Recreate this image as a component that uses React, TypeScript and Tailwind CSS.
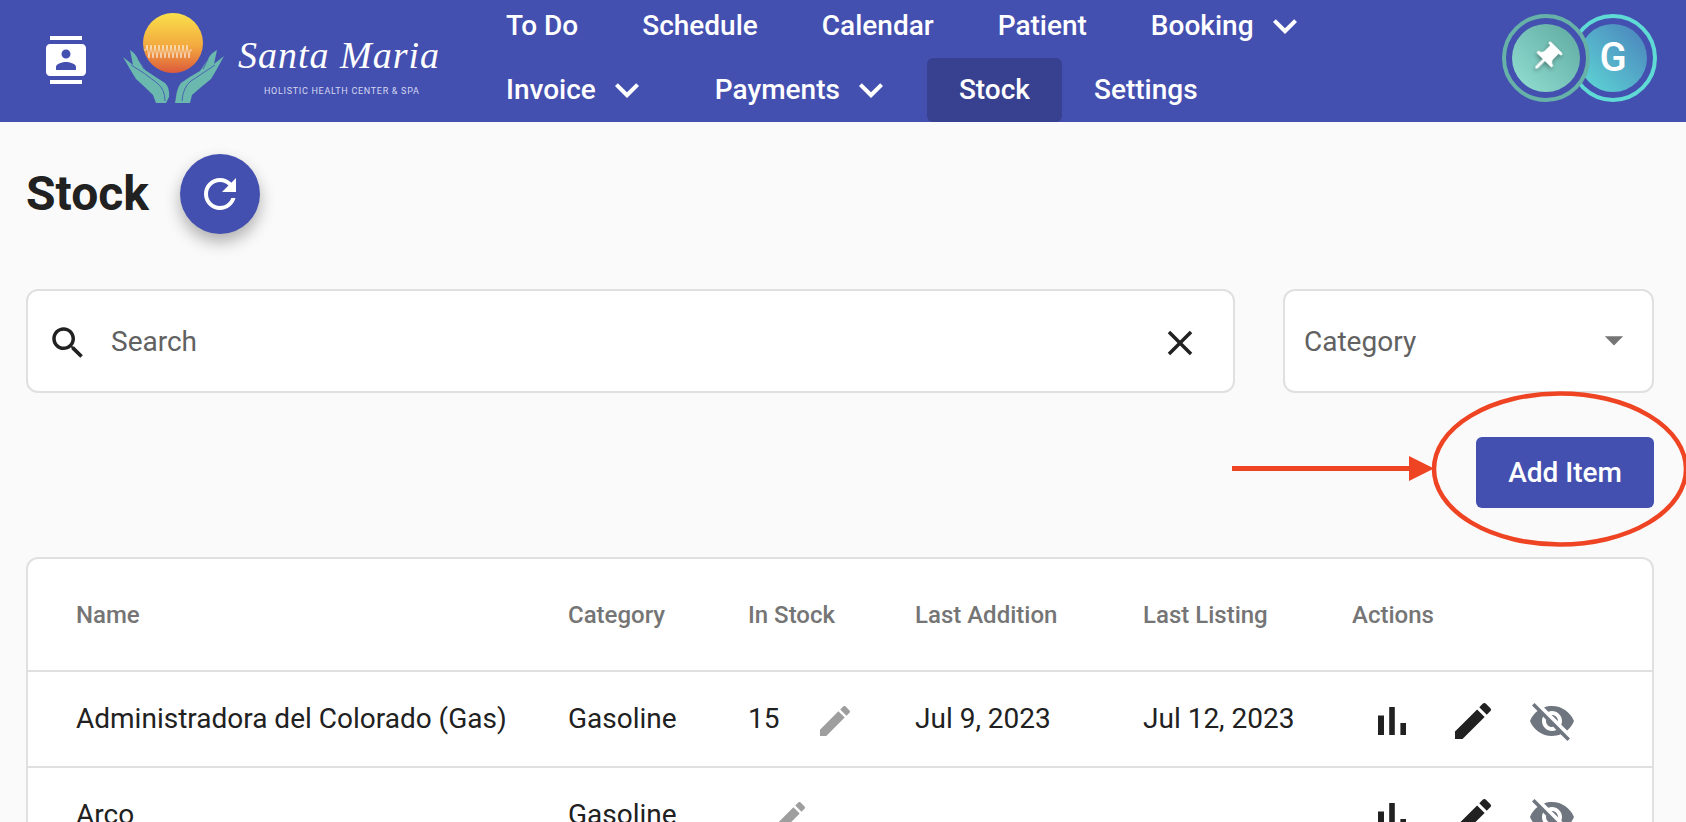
const ICONS = {
  contacts: 'M20 0H4v2h16V0zM4 24h16v-2H4v2zM20 4H4c-1.1 0-2 .9-2 2v12c0 1.1.9 2 2 2h16c1.1 0 2-.9 2-2V6c0-1.1-.9-2-2-2zm-8 2.75c1.24 0 2.25 1.01 2.25 2.25s-1.01 2.25-2.25 2.25S9.75 10.24 9.75 9 10.76 6.75 12 6.75zM17 17H7v-1.5c0-1.67 3.33-2.5 5-2.5s5 .83 5 2.5V17z',
  chevron: 'M16.59 8.59L12 13.17 7.41 8.59 6 10l6 6 6-6z',
  refresh: 'M17.65 6.35C16.2 4.9 14.21 4 12 4c-4.42 0-7.99 3.58-7.99 8s3.57 8 7.99 8c3.73 0 6.84-2.55 7.73-6h-2.08c-.82 2.33-3.04 4-5.65 4-3.31 0-6-2.69-6-6s2.69-6 6-6c1.66 0 3.14.69 4.22 1.78L13 11h7V4l-2.35 2.35z',
  search: 'M15.5 14h-.79l-.28-.27C15.41 12.59 16 11.11 16 9.5 16 5.91 13.09 3 9.5 3S3 5.91 3 9.5 5.91 16 9.5 16c1.61 0 3.09-.59 4.23-1.57l.27.28v.79l5 4.99L20.49 19l-4.99-5zm-6 0C7.01 14 5 11.99 5 9.5S7.01 5 9.5 5 14 7.01 14 9.5 11.99 14 9.5 14z',
  close: 'M19 6.41L17.59 5 12 10.59 6.41 5 5 6.41 10.59 12 5 17.59 6.41 19 12 13.41 17.59 19 19 17.59 13.41 12z',
  caret: 'M7 10l5 5 5-5z',
  edit: 'M3 17.25V21h3.75L17.81 9.94l-3.75-3.75L3 17.25zM20.71 7.04c.39-.39.39-1.02 0-1.41l-2.34-2.34c-.39-.39-1.02-.39-1.41 0l-1.83 1.83 3.75 3.75 1.83-1.83z',
  chart: 'M5 9.2h3V19H5zM10.6 5h2.8v14h-2.8zm5.6 8H19v6h-2.8z',
  hidden: 'M12 7c2.76 0 5 2.24 5 5 0 .65-.13 1.26-.36 1.83l2.92 2.92c1.51-1.26 2.7-2.89 3.43-4.75-1.73-4.39-6-7.5-11-7.5-1.4 0-2.74.25-3.98.7l2.16 2.16C10.74 7.13 11.35 7 12 7zM2 4.27l2.28 2.28.46.46C3.08 8.3 1.78 10.02 1 12c1.73 4.39 6 7.5 11 7.5 1.55 0 3.03-.3 4.38-.84l.42.42L19.73 22 21 20.73 3.27 3 2 4.27zM7.53 9.8l1.55 1.55c-.05.21-.08.43-.08.65 0 1.66 1.34 3 3 3 .22 0 .44-.03.65-.08l1.55 1.55c-.67.33-1.41.53-2.2.53-2.76 0-5-2.24-5-5 0-.79.2-1.53.53-2.2zm4.31-.78l3.15 3.15.02-.16c0-1.66-1.34-3-3-3l-.17.01z',
  pin: 'M16 9V4h1c.55 0 1-.45 1-1s-.45-1-1-1H7c-.55 0-1 .45-1 1s.45 1 1 1h1v5c0 1.66-1.34 3-3 3v2h5.97v7l1 1 1-1v-7H19v-2c-1.66 0-3-1.34-3-3z',
}

function Icon({ name, className }: { name: keyof typeof ICONS; className: string }) {
  return (
    <svg viewBox="0 0 24 24" fill="currentColor" className={className}>
      <path d={ICONS[name]} />
    </svg>
  )
}

function Logo() {
  return (
    <div className="ml-[33px] flex w-[318px] items-start">
      <svg viewBox="0 0 102 90" className="mt-[13px] h-[90px] w-[102px] shrink-0">
        <defs>
          <linearGradient id="sun" x1="0" y1="0" x2="0" y2="1">
            <stop offset="0" stopColor="#f9e04b" />
            <stop offset="0.55" stopColor="#f3a93f" />
            <stop offset="1" stopColor="#dc5a3c" />
          </linearGradient>
        </defs>
        <circle cx="50" cy="30" r="30" fill="url(#sun)" />
        <path
          d="M21 37 h2 l1 -5 l2 13 l2 -13 l2 13 l2 -13 l2 13 l2 -13 l2 13 l2 -13 l2 13 l2 -13 l2 13 l2 -13 l2 13 l2 -13 l2 13 l2 -13 l2 13 l2 -13 l2 13 l2 -13 l2 13 l1 -8 h2"
          fill="none"
          stroke="#fff"
          strokeOpacity="0.75"
          strokeWidth="0.8"
        />
        <path d="M0 44 L10 52 L7 37 Q12 40 15 46 L19 52 L22 57 Q34 65 42 70 Q47 75 46 84 L43 90 L33 90 L30 82 Q22 74 13 66 Q8 58 0 44 Z" fill="#6ab8ae" />
        <path d="M101 43 L91 51 L94 37 Q88 40 85 46 L81 52 L77 58 Q66 64 58 70 Q54 75 53 84 L52 90 L67 90 L69 82 Q78 74 88 66 Q93 58 101 43 Z" fill="#6ab8ae" />
        <path d="M8 52 Q22 60 34 70 Q42 76 42 88 M15 46 L21 56 M92 52 Q80 60 68 68 Q60 74 59 88 M85 46 L80 56" fill="none" stroke="#4450b0" strokeWidth="0.8" />
      </svg>
      <div className="ml-[13px] flex flex-col pt-[32px] text-white">
        <span className="font-['Liberation_Serif',serif] text-[38px] leading-[46px] tracking-[1px] whitespace-nowrap italic">Santa Maria</span>
        <span className="mt-[8px] ml-[26px] text-[9px] leading-[10px] tracking-[0.7px] whitespace-nowrap text-[#d5d8f0]">HOLISTIC HEALTH CENTER &amp; SPA</span>
      </div>
    </div>
  )
}

function NavItem({ label, menu, active }: { label: string; menu?: boolean; active?: boolean }) {
  return (
    <button
      className={`flex h-full items-center rounded-md px-8 text-[28px] font-medium text-white ${active ? 'bg-[#38418f]' : ''}`}
    >
      {label}
      {menu && <Icon name="chevron" className="ml-[7px] h-12 w-12" />}
    </button>
  )
}

function Header() {
  return (
    <header className="flex h-[122px] shrink-0 items-start bg-[#4450b0] pl-[42px]">
      <Icon name="contacts" className="mt-9 h-12 w-12 shrink-0 text-white" />
      <Logo />
      <nav className="ml-[33px] flex flex-col">
        <div className="flex h-[52px] items-center">
          <NavItem label="To Do" />
          <NavItem label="Schedule" />
          <NavItem label="Calendar" />
          <NavItem label="Patient" />
          <NavItem label="Booking" menu />
        </div>
        <div className="mt-[6px] flex h-[64px] items-center">
          <NavItem label="Invoice" menu />
          <NavItem label="Payments" menu />
          <NavItem label="Stock" active />
          <NavItem label="Settings" />
        </div>
      </nav>
      <div className="mt-[14px] mr-[29px] ml-auto flex">
        <div className="z-10 flex h-[88px] w-[88px] items-center justify-center rounded-full border-4 border-[#66b2a8] bg-[#4450b0]">
          <div className="flex h-[68px] w-[68px] items-center justify-center rounded-full bg-gradient-to-tr from-[#93e0d4] to-[#5fa9a0]">
            <Icon name="pin" className="h-9 w-9 rotate-45 text-white drop-shadow-[1px_2px_2px_rgba(0,0,0,0.35)]" />
          </div>
        </div>
        <div className="-ml-[21px] flex h-[88px] w-[88px] items-center justify-center rounded-full border-4 border-[#5fdad5]">
          <div className="flex h-[68px] w-[68px] items-center justify-center rounded-full bg-gradient-to-tr from-[#5fdad5] to-[#4a80bb] text-[40px] font-medium text-white">
            G
          </div>
        </div>
      </div>
    </header>
  )
}

const COLUMNS = 'grid grid-cols-[492px_180px_167px_228px_209px_1fr] items-center pl-[48px]'

function ActionIcons() {
  return (
    <div className="ml-4 flex gap-[33px] pt-[3px]">
      <Icon name="chart" className="h-12 w-12 text-[#212121]" />
      <Icon name="edit" className="h-12 w-12 text-[#212121]" />
      <Icon name="hidden" className="-ml-[2px] h-12 w-12 text-[#6f7680]" />
    </div>
  )
}

function Row({ name, category, stock, added, listed }: { name: string; category: string; stock?: string; added?: string; listed?: string }) {
  return (
    <div className={`${COLUMNS} h-[96px] shrink-0 border-b-2 border-[#e0e0e0] text-[28px] text-[#212121]`}>
      <span>{name}</span>
      <span>{category}</span>
      <div className="flex items-center">
        <span className={stock ? 'w-[67px]' : 'w-[22px]'}>{stock}</span>
        <Icon name="edit" className="mt-[3px] h-10 w-10 text-[#9e9e9e]" />
      </div>
      <span>{added}</span>
      <span>{listed}</span>
      <ActionIcons />
    </div>
  )
}

function StockTable() {
  return (
    <div className="mt-[49px] rounded-t-xl border-2 border-b-0 border-[#e0e0e0] bg-white">
      <div className={`${COLUMNS} h-[113px] border-b-2 border-[#e0e0e0] pt-[1px] text-[24px] font-medium text-[#757575]`}>
        <span>Name</span>
        <span>Category</span>
        <span>In Stock</span>
        <span>Last Addition</span>
        <span>Last Listing</span>
        <span>Actions</span>
      </div>
      <Row name="Administradora del Colorado (Gas)" category="Gasoline" stock="15" added="Jul 9, 2023" listed="Jul 12, 2023" />
      <Row name="Arco" category="Gasoline" />
    </div>
  )
}

export default function App() {
  return (
    <div className="relative flex h-screen flex-col overflow-hidden bg-[#fafafa] font-['Roboto',sans-serif]">
      <Header />
      <main className="pr-[32px] pl-[26px]">
        <div className="mt-[32px] flex items-center">
          <h1 className="text-[48px] font-bold text-[#212121]">Stock</h1>
          <button className="ml-[31px] flex h-20 w-20 items-center justify-center rounded-full bg-[#4450b0] text-white shadow-[0_8px_16px_rgba(0,0,0,0.3)]">
            <Icon name="refresh" className="h-12 w-12" />
          </button>
        </div>

        <div className="mt-[55px] flex gap-[48px]">
          <div className="flex h-[104px] flex-1 items-center rounded-xl border-2 border-[#e0e0e0] bg-white pr-[32px] pl-[19px]">
            <Icon name="search" className="mt-[4px] h-[42px] w-[42px] text-[#212121]" />
            <span className="mt-[2px] ml-[22px] text-[28px] text-[#616161]">Search</span>
            <Icon name="close" className="mt-[4px] ml-auto h-[42px] w-[42px] text-[#212121]" />
          </div>
          <div className="flex h-[104px] w-[371px] items-center justify-between rounded-xl border-2 border-[#e0e0e0] bg-white pr-[16px] pl-[19px]">
            <span className="mt-[2px] text-[28px] text-[#616161]">Category</span>
            <Icon name="caret" className="-mt-[2px] h-11 w-11 text-[#757575]" />
          </div>
        </div>

        <div className="mt-[44px] flex justify-end">
          <button className="h-[71px] w-[178px] rounded-md bg-[#4450b0] text-[28px] font-medium text-white">Add Item</button>
        </div>

        <StockTable />
      </main>

      {/* red annotation drawn over the page */}
      <svg viewBox="0 0 1686 822" className="pointer-events-none absolute inset-0 h-[822px] w-[1686px]">
        <ellipse cx="1560" cy="469" rx="126" ry="75.5" fill="none" stroke="#ee4423" strokeWidth="4.5" />
        <rect x="1232" y="466" width="180" height="5" fill="#ee4423" />
        <path d="M1409 456 L1434 468.5 L1409 481 Z" fill="#ee4423" />
      </svg>
    </div>
  )
}
